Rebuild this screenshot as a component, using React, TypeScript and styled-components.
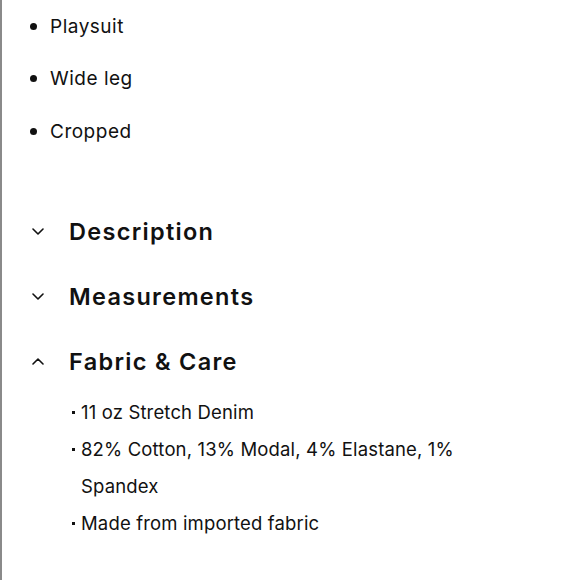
import React from "react";
import styled, { createGlobalStyle } from "styled-components";

const GlobalStyle = createGlobalStyle`
  html, body {
    margin: 0;
    padding: 0;
    background: #ffffff;
  }
  body {
    font-family: Inter, "Open Sans", sans-serif;
    color: #111111;
  }
`;

const Page = styled.div`
  box-sizing: border-box;
  width: 580px;
  min-height: 580px;
  border-left: 2px solid #8a8a8a;
  background: #ffffff;
`;

const TagList = styled.ul`
  list-style: none;
  margin: 0;
  padding: 0 0 0 28px;
`;

const TagItem = styled.li`
  display: flex;
  align-items: center;
  height: 52.5px;
  font-size: 19px;
  letter-spacing: 0.5px;
  color: #111111;
`;

const TagDot = styled.span`
  width: 7px;
  height: 7px;
  border-radius: 50%;
  background: #111111;
  margin-right: 13px;
  flex: none;
`;

const Accordion = styled.div`
  margin-top: 41px;
  padding-left: 30px;
`;

const Section = styled.section``;

const Header = styled.button`
  display: flex;
  align-items: center;
  gap: 25px;
  height: 65px;
  padding: 0;
  border: none;
  background: none;
  cursor: pointer;
  font-family: Inter, "Open Sans", sans-serif;
  font-size: 23.5px;
  font-weight: 600;
  letter-spacing: 1.3px;
  color: #111111;
`;

const Chevron = styled.svg`
  width: 12px;
  height: 7px;
  flex: none;
`;

const CareList = styled.ul`
  list-style: none;
  margin: 0;
  padding: 0 0 0 40px;
  width: 400px;
`;

const CareItem = styled.li`
  display: flex;
  align-items: flex-start;
  font-size: 18.5px;
  line-height: 37px;
  letter-spacing: 0.15px;
  color: #111111;
`;

const CareDot = styled.span`
  width: 3px;
  height: 3px;
  background: #111111;
  margin: 17px 6px 0 0;
  flex: none;
`;

const CareText = styled.span`
  flex: 1;
`;

const ChevronIcon = ({ open }: { open: boolean }) => (
  <Chevron viewBox="0 0 12 7" fill="none">
    <polyline
      points={open ? "1,6 6,1 11,6" : "1,1 6,6 11,1"}
      stroke="#111111"
      strokeWidth="1.6"
      strokeLinecap="round"
      strokeLinejoin="round"
    />
  </Chevron>
);

const tags = ["Playsuit", "Wide leg", "Cropped"];
const sections = [
  { title: "Description", open: false },
  { title: "Measurements", open: false },
  { title: "Fabric & Care", open: true },
];
const care = [
  "11 oz Stretch Denim",
  "82% Cotton, 13% Modal, 4% Elastane, 1% Spandex",
  "Made from imported fabric",
];

export default function App() {
  return (
    <Page>
      <GlobalStyle />
      <TagList>
        {tags.map((t) => (
          <TagItem key={t}>
            <TagDot />
            {t}
          </TagItem>
        ))}
      </TagList>
      <Accordion>
        {sections.map((s) => (
          <Section key={s.title}>
            <Header>
              <ChevronIcon open={s.open} />
              {s.title}
            </Header>
            {s.open && (
              <CareList>
                {care.map((c) => (
                  <CareItem key={c}>
                    <CareDot />
                    <CareText>{c}</CareText>
                  </CareItem>
                ))}
              </CareList>
            )}
          </Section>
        ))}
      </Accordion>
    </Page>
  );
}
